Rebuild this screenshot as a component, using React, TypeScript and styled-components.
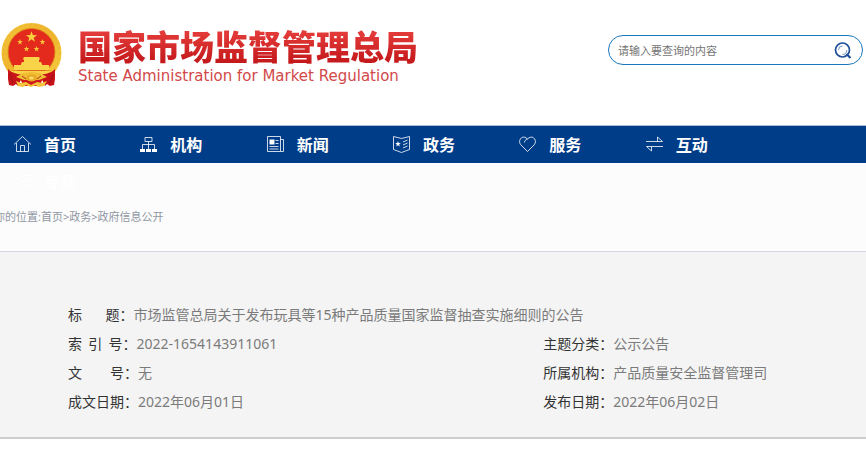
import React from "react";
import styled, { createGlobalStyle } from "styled-components";

const GlobalStyle = createGlobalStyle`
  *, *::before, *::after { box-sizing: border-box; }
  body {
    margin: 0;
    background: #fff;
    font-family: "Noto Sans", "Noto Sans CJK SC", sans-serif;
    font-size: 14px;
    color: #333;
    overflow-x: hidden;
  }
`;

const Header = styled.header`
  display: flex;
  justify-content: space-between;
  align-items: flex-start;
  padding: 22px 3px 37px 0;
`;

const Brand = styled.a`
  display: flex;
  align-items: flex-start;
  gap: 15px;
  text-decoration: none;
`;

const BrandText = styled.span`
  display: flex;
  flex-direction: column;
  padding-top: 3px;
`;

const BrandName = styled.span`
  font: 900 34px/42px "Noto Sans CJK SC", sans-serif;
  color: transparent;
  background: linear-gradient(#e23a38 20%, #c4181b 90%);
  background-clip: text;
  white-space: nowrap;
`;

const BrandSub = styled.span`
  font: 15px/18px "DejaVu Sans", sans-serif;
  color: #d2494a;
  white-space: nowrap;
`;

const Search = styled.form`
  display: flex;
  align-items: center;
  width: 255px;
  height: 30px;
  margin-top: 13px;
  padding: 0 10px 0 9px;
  border: 1px solid #1878be;
  border-radius: 15px;
  background: #fff;
`;

const SearchInput = styled.input`
  flex: 1;
  min-width: 0;
  padding: 0;
  border: 0;
  outline: 0;
  background: transparent;
  font: 11px/16px "Noto Sans CJK SC", sans-serif;
  color: #333;
  &::placeholder { color: #757575; opacity: 1; }
`;

const SearchButton = styled.button`
  display: flex;
  padding: 2px 0 0;
  border: 0;
  background: none;
  cursor: pointer;
`;

const Nav = styled.nav`
  height: 37px;
  background: #003d89;
  box-shadow: 0 -1px #a9bfd9, 0 1px #7f9fc6;
`;

const NavList = styled.ul`
  display: grid;
  grid-template-columns: repeat(6, 1fr);
  grid-auto-rows: 37px;
  margin: 0;
  padding: 0 108px 0 13px;
  margin-right: -13px;
  list-style: none;
`;

const NavLink = styled.a`
  display: flex;
  align-items: center;
  gap: 12px;
  height: 37px;
  padding-bottom: 2px;
  color: #fff;
  font: bold 16px/24px "Noto Sans CJK SC", sans-serif;
  text-decoration: none;
`;

const Crumbs = styled.nav`
  height: 89px;
  padding-top: 44px;
  background: #fcfcfc;
  border-bottom: 1px solid #d5d8e2;
  font-size: 11px;
  line-height: 20px;
  color: #8f96a3;
  white-space: nowrap;
`;

const CrumbTrail = styled.div`
  margin-left: -6px;
`;

const CrumbLink = styled.a`
  color: inherit;
  text-decoration: none;
`;

const Details = styled.dl`
  display: grid;
  grid-template-columns: 3fr 2fr;
  grid-auto-rows: 29px;
  margin: 0;
  padding: 48px 6px 21px 68px;
  background: #f4f4f4;
  border-bottom: 2px solid #ccc;
`;

const Field = styled.div<{ $wide?: boolean }>`
  display: flex;
  grid-column: ${(p) => (p.$wide ? "1 / -1" : "auto")};
  line-height: 29px;
  white-space: pre;
`;

const Label = styled.dt`
  font-family: "Noto Sans CJK SC", sans-serif;
  color: #333;
`;

const Value = styled.dd`
  margin: 0;
  color: #7b7b7b;
`;

const star = (cx: number, cy: number, r: number) =>
  Array.from({ length: 10 }, (_, i) => {
    const a = -Math.PI / 2 + (i * Math.PI) / 5;
    const k = i % 2 ? r * 0.4 : r;
    return `${cx + k * Math.cos(a)},${cy + k * Math.sin(a)}`;
  }).join(" ");

const Emblem = () => (
  <svg width="63" height="67" viewBox="0 0 63 67" aria-hidden="true">
    <defs>
      <linearGradient id="gold" x1="0" y1="0" x2="1" y2="1">
        <stop offset="0" stopColor="#f3c43a" />
        <stop offset=".5" stopColor="#eeb42c" />
        <stop offset="1" stopColor="#f7cf43" />
      </linearGradient>
    </defs>
    <circle cx="31.500" cy="31" r="30" fill="url(#gold)" />
    <circle cx="31.500" cy="31" r="28" fill="none" stroke="#d99a20" strokeWidth="1" strokeDasharray="2 3" opacity=".35" />
    <circle cx="31.500" cy="30" r="23.500" fill="#e32a1d" stroke="#d98a18" strokeWidth=".8" />
    <polygon points={star(31.5, 15, 5.8)} fill="#f8cf3d" />
    <polygon points={star(20, 20, 3)} fill="#f6c93b" />
    <polygon points={star(42.500, 20, 3)} fill="#f6c93b" />
    <polygon points={star(26.500, 27, 3)} fill="#f6c93b" />
    <polygon points={star(36.500, 27, 3)} fill="#f6c93b" />
    <path d="M24 35h15l1 2-1 1v2h2l1 2v1H21v-1l1-2h2v-2l-1-1zM14 43h35v5H14zM10 49h43l-3 4H13z" fill="#f9d348" />
    <path d="M12 48.500h39" stroke="#d98a18" strokeWidth=".7" />
    <path d="M8 47c5 5 11 5 15 6l-5 11-2-2-3 2-4-1-1-6zM55 47c-5 5-11 5-15 6l5 11 2-2 3 2 4-1 1-6z" fill="#c8121a" />
    <path d="M20 55l11-2 12 2-3 9H23z" fill="#cf171b" />
    <path d="M16 55l7-4 8-1 9 1 7 4-8 3H24z" fill="#f0bd34" />
    <ellipse cx="31.500" cy="56" rx="5.500" ry="3.500" fill="#e8a823" />
    <ellipse cx="31.500" cy="56" rx="2.500" ry="1.500" fill="#f9dc67" />
    <path d="M16 59l5 2 5-1 5 3 6-3 5 1 5-2-3 5-6 1-2-2-5 2-5-2-3 2-5-1z" fill="#f3c43a" />
    <path d="M10 52l3 9M53 52l-3 9M22 54l4 3M41 54l-4 3" stroke="#951016" strokeWidth=".8" />
  </svg>
);

const SearchIcon = () => (
  <svg width="18" height="18" viewBox="0 0 18 18" fill="none" stroke="#1f4f9b" aria-hidden="true">
    <circle cx="8.500" cy="8" r="7" strokeWidth="1.700" />
    <path d="M4.500 8a4 4 0 0 1 4-4" strokeWidth="1" opacity=".6" />
    <path d="M8.500 12.500a4.500 4.500 0 0 0 4.300-4.500" strokeWidth="1" opacity=".6" />
    <path d="M12.500 12l4 4" strokeWidth="2.200" />
  </svg>
);

const NavSvg = ({ children }: { children: React.ReactNode }) => (
  <svg width="19" height="18" viewBox="0 0 19 18" fill="none" stroke="#fff" strokeOpacity=".8" aria-hidden="true">
    {children}
  </svg>
);

const navItems = [
  { text: "首页", icon: <path d="M1 9.500L9.500 1.500 18 9.500M3.500 8v8.500h12V8M7.500 16.500v-6h4v6" /> },
  {
    text: "机构",
    icon: (
      <>
        <path d="M6 2.500h7v4H6zM9.500 6.500v8M3.500 14v-4.500h12V14" />
        <path d="M1 14h5v3H1zM7 14h5v3H7zM13 14h5v3h-5z" fill="#fff" stroke="none" />
      </>
    ),
  },
  {
    text: "新闻",
    icon: (
      <>
        <path d="M1.500 1.500h13v15h-13zM14.500 4.500h3v12h-3M9.500 5.500h3M9.500 8.500h3M3.500 11.500h9M3.500 14h9" />
        <path d="M3.500 4.500h5v5h-5z" fill="#fff" stroke="none" />
      </>
    ),
  },
  {
    text: "政务",
    icon: (
      <>
        <path d="M9.500 3.500L1.500 1.500v13l8 3 8-3v-13zM11 7l4.500-2M11 10l4.500-2M11 13l4.500-2" />
        <polygon points={star(6, 9, 3)} fill="#fff" stroke="none" />
      </>
    ),
  },
  {
    text: "服务",
    icon: <path d="M9.500 16.500L2.800 9.800C-.5 6 3.500 0 8 2.800L9.500 4 11 2.800C15.500 0 19.500 6 16.200 9.800zM9.500 4C7.500 4.500 6.500 6 6.500 7.500" />,
  },
  { text: "互动", icon: <path d="M1 6.500h16.500L12.500 2v4.500M18 11.500H1.500L6.500 16v-4.500" /> },
  {
    text: "专题",
    icon: <path d="M2 2.500h4v4H2zM2 11.500h4v4H2zM10 3.500h8M10 8.500h8M10 13.500h8" />,
  },
];

const fields = [
  { label: "标\u3000\u00a0\u00a0\u00a0题：", value: "市场监管总局关于发布玩具等15种产品质量国家监督抽查实施细则的公告", wide: true },
  { label: "索\u00a0\u00a0引\u00a0\u00a0号：", value: "2022-1654143911061" },
  { label: "主题分类：", value: "公示公告" },
  { label: "文\u3000\u3000号：", value: "无" },
  { label: "所属机构：", value: "产品质量安全监督管理司" },
  { label: "成文日期：", value: "2022年06月01日" },
  { label: "发布日期：", value: "2022年06月02日" },
];

export default function App() {
  return (
    <>
      <GlobalStyle />
      <Header>
        <Brand href="#">
          <Emblem />
          <BrandText>
            <BrandName>国家市场监督管理总局</BrandName>
            <BrandSub>State Administration for Market Regulation</BrandSub>
          </BrandText>
        </Brand>
        <Search role="search">
          <SearchInput type="text" aria-label="搜索" placeholder="请输入要查询的内容" />
          <SearchButton type="submit" aria-label="搜索">
            <SearchIcon />
          </SearchButton>
        </Search>
      </Header>
      <Nav>
        <NavList>
          {navItems.map((item) => (
            <li key={item.text}>
              <NavLink href="#">
                <NavSvg>{item.icon}</NavSvg>
                {item.text}
              </NavLink>
            </li>
          ))}
        </NavList>
      </Nav>
      <Crumbs>
        <CrumbTrail>
          你的位置:<CrumbLink href="#">首页</CrumbLink>&gt;<CrumbLink href="#">政务</CrumbLink>&gt;
          <CrumbLink href="#">政府信息公开</CrumbLink>
        </CrumbTrail>
      </Crumbs>
      <Details>
        {fields.map((f) => (
          <Field key={f.label} $wide={f.wide}>
            <Label>{f.label}</Label>
            <Value>{f.value}</Value>
          </Field>
        ))}
      </Details>
    </>
  );
}
